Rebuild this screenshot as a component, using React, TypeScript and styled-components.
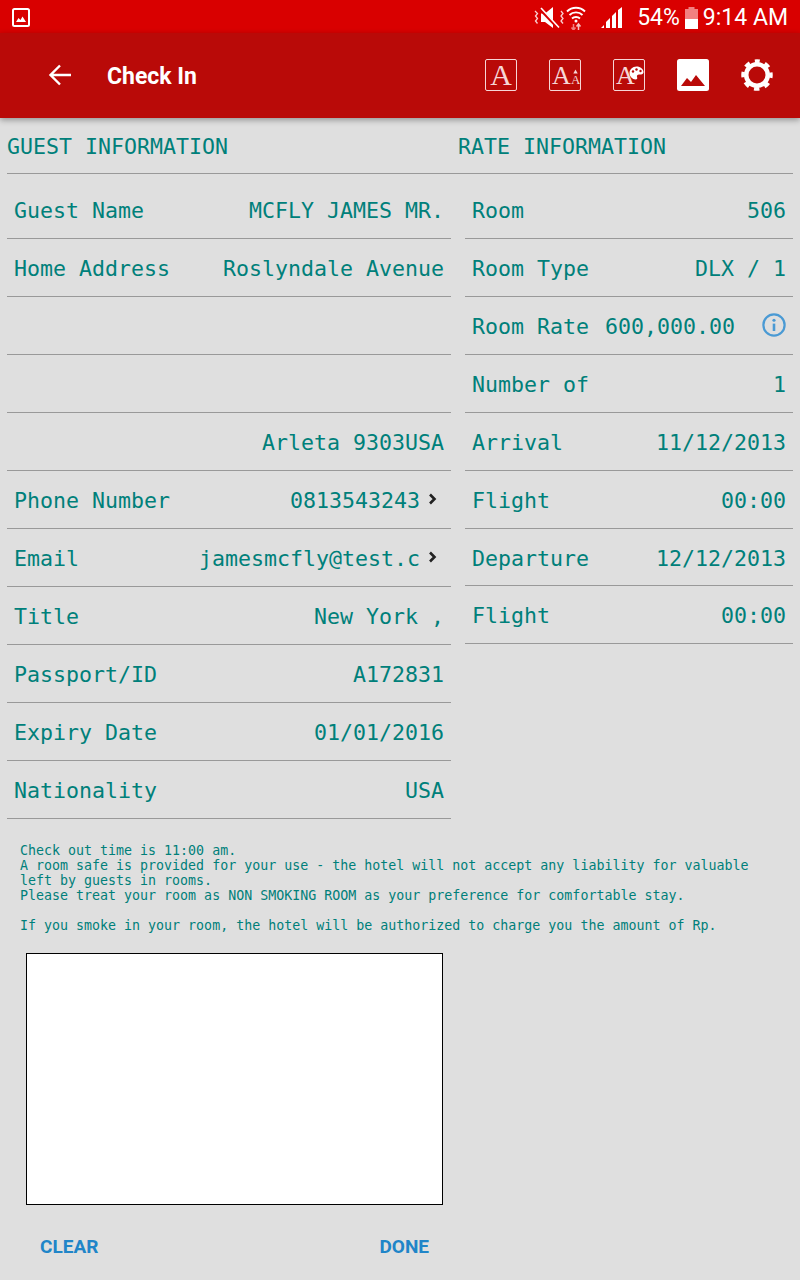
import styled, { createGlobalStyle } from 'styled-components'

const GlobalStyle = createGlobalStyle`
  html, body {
    margin: 0;
    padding: 0;
    background: #dfdfdf;
  }
`

const Page = styled.div`
  width: 800px;
  height: 1280px;
  overflow: hidden;
  background: #dfdfdf;
  color: #00807a;
  font-family: 'DejaVu Sans Mono', 'Liberation Mono', monospace;
`

const StatusBar = styled.div`
  box-sizing: border-box;
  height: 33px;
  background: #d90000;
  color: #fff;
  display: flex;
  align-items: center;
  padding: 2px 12px 0 12px;
  font-family: Roboto, sans-serif;
  font-size: 23px;
`

const StatusRight = styled.div`
  margin-left: auto;
  display: flex;
  align-items: center;
`

const StatusItem = styled.span<{ $left: number }>`
  display: flex;
  align-items: center;
  margin-left: ${(p) => p.$left}px;
`

const Toolbar = styled.div`
  position: relative;
  box-sizing: border-box;
  height: 85px;
  background: #b90a08;
  box-shadow: 0 2px 6px rgba(0, 0, 0, 0.35);
  display: flex;
  align-items: center;
  padding: 0 27px 1px 48px;
  color: #fff;
`

const Title = styled.div`
  margin: 2px 0 0 35px;
  font-family: Roboto, sans-serif;
  font-weight: 700;
  font-size: 23px;
`

const ToolIcons = styled.div`
  margin-left: auto;
  display: flex;
  gap: 32px;
`

const Columns = styled.div`
  display: flex;
  padding: 0 7px;
`

const LeftColumn = styled.div`
  width: 444px;
`

const RightColumn = styled.div`
  width: 328px;
  margin-left: 14px;
`

const SectionHead = styled.div`
  height: 55px;
  border-bottom: 1px solid #999;
  font-size: 21.6px;
  line-height: 57px;
`

const RateHead = styled(SectionHead)`
  margin-left: -14px;
  padding-left: 7px;
`

const Row = styled.div<{ $height?: number }>`
  box-sizing: border-box;
  height: ${(p) => p.$height ?? 58}px;
  border-bottom: 1px solid #999;
  display: flex;
  align-items: center;
  justify-content: space-between;
  padding: ${(p) => (p.$height === 65 ? 8 : 2)}px 7px 0;
  font-size: 21.6px;
  white-space: nowrap;
`

const Value = styled.span`
  display: flex;
  align-items: center;
`

const MoreIcon = styled.svg`
  margin: -4px 7px 0 8px;
`

const RateInfo = styled.svg`
  margin: -4px 0 0 27px;
`

const Notes = styled.div`
  margin: 24px 0 0 20px;
  width: 740px;
  font-size: 13.3px;
  line-height: 15px;
  white-space: pre-wrap;
`

const SignatureBox = styled.div`
  width: 415px;
  height: 250px;
  margin: 20px 0 0 26px;
  background: #fff;
  border: 1px solid #000;
`

const Actions = styled.div`
  width: 389px;
  margin: 30px 0 0 40px;
  display: flex;
  justify-content: space-between;
`

const ActionButton = styled.button`
  padding: 0;
  border: 0;
  background: none;
  color: #2085c8;
  font-family: Roboto, sans-serif;
  font-weight: 700;
  font-size: 19px;
  line-height: 24px;
`

const FrameGlyph = styled.text<{ $size: number }>`
  font-family: 'Liberation Serif', serif;
  font-size: ${(p) => p.$size}px;
  fill: #f6d6d6;
`

const PictureBadge = () => (
  <svg width="18" height="19" viewBox="0 0 18 19">
    <rect x="1" y="1" width="16" height="17" rx="1.5" fill="none" stroke="#fff" strokeWidth="2" />
    <path d="M4 14l2.5-4 2 2 2-3.5 3.500 5.500z" fill="#fff" />
  </svg>
)

const MuteIcon = () => (
  <svg width="32" height="24" viewBox="0 0 32 24" fill="none">
    <path d="M2 5l2.500 2.500-2 2.500 2 2.500-2 2.500 2 2.500" stroke="#f8d0d0" strokeWidth="1.3" />
    <path d="M8 7.500h4l8-6.500v21l-8-6h-4z" fill="#fff" />
    <path d="M7 3l18 19" stroke="#d90000" strokeWidth="3" />
    <path d="M8 2l18 19.500" stroke="#fff" strokeWidth="1.6" />
    <path d="M28 5l2 2.500-2 2.500 2 2.500-2 2.500 2 2.500" stroke="#f8d0d0" strokeWidth="1.3" />
  </svg>
)

const WifiIcon = () => (
  <svg width="20" height="24" viewBox="0 0 20 24" fill="none">
    <path d="M1 5.500c5-5 13-5 18 0M3.500 9c3.500-3.500 9.500-3.500 13 0M6 12.500c2.200-2 5.800-2 8 0" stroke="#fff" strokeWidth="1.9" />
    <circle cx="10" cy="15" r="1.5" fill="#fff" />
    <path d="M7.500 18v6M5.500 21.500l2 2.500 2-2.500" stroke="#f28080" strokeWidth="1.5" />
    <path d="M12.500 24v-6M10.500 20.500l2-2.500 2 2.500" stroke="#f8c0c0" strokeWidth="1.5" />
  </svg>
)

const SignalIcon = () => (
  <svg width="22" height="21" viewBox="0 0 22 21" fill="#fff">
    <path d="M0 21l3-3v3zM5 21v-6l4-4v10zM11 21V9l4-4v16zM17 21V3l4-3v21z" />
  </svg>
)

const BatteryIcon = () => (
  <svg width="13" height="22" viewBox="0 0 13 22">
    <rect x="3.5" y="0" width="6" height="2" fill="#f28080" />
    <rect x="0" y="2" width="13" height="10" fill="#f28080" />
    <rect x="0" y="12" width="13" height="10" fill="#fff" />
  </svg>
)

const BackArrow = () => (
  <svg width="24" height="24" viewBox="0 0 24 24" fill="none" stroke="#fff" strokeWidth="2.4">
    <path d="M23 12H3M12 2.500L2.500 12l9.500 9.500" />
  </svg>
)

const FontIcon = () => (
  <svg width="32" height="32" viewBox="0 0 32 32">
    <rect x="0.5" y="0.5" width="31" height="31" rx="1.5" fill="none" stroke="#f6d6d6" />
    <FrameGlyph $size={30} x="16" y="26" textAnchor="middle">A</FrameGlyph>
  </svg>
)

const FontSizeIcon = () => (
  <svg width="32" height="32" viewBox="0 0 32 32">
    <rect x="0.5" y="0.5" width="31" height="31" rx="1.5" fill="none" stroke="#f6d6d6" />
    <FrameGlyph $size={26} x="3" y="25">A</FrameGlyph>
    <FrameGlyph $size={13} x="22" y="25">A</FrameGlyph>
    <path d="M26.500 10.500l2.200 4h-4.400z" fill="#f6d6d6" />
  </svg>
)

const FontColorIcon = () => (
  <svg width="32" height="32" viewBox="0 0 32 32">
    <rect x="0.5" y="0.5" width="31" height="31" rx="1.5" fill="none" stroke="#f6d6d6" />
    <FrameGlyph $size={26} x="3" y="25">A</FrameGlyph>
    <path d="M23.500 7.500c-4 0-7 3-7 6.500s3 6.500 6 6.500c2 0 2-1.500 1.500-2.500-.5-1.500.5-2.500 2-2.500h2c1.500 0 2.500-1 2.500-2.500 0-3-3-5.500-7-5.500z" fill="#fff" />
    <circle cx="20" cy="12.500" r="1.200" fill="#b90a08" />
    <circle cx="23.500" cy="10.500" r="1.200" fill="#b90a08" />
    <circle cx="27.500" cy="12" r="1.200" fill="#b90a08" />
  </svg>
)

const ImageIcon = () => (
  <svg width="32" height="32" viewBox="0 0 32 32">
    <rect width="32" height="32" rx="2.5" fill="#fff" />
    <path d="M4 27l6-8 4 4 5-7 9 11z" fill="#b90a08" />
  </svg>
)

const GearIcon = () => (
  <svg width="32" height="32" viewBox="0 0 32 32" fill="none" stroke="#fff">
    <circle cx="16" cy="16" r="10.750" strokeWidth="4.5" />
    <circle cx="16" cy="16" r="14" strokeWidth="3.5" strokeDasharray="5.500 5.496" strokeDashoffset="2.750" transform="rotate(-90 16 16)" />
  </svg>
)

const InfoIcon = () => (
  <RateInfo width="24" height="24" viewBox="0 0 26 26" fill="none">
    <circle cx="13" cy="13" r="11.500" stroke="#4a9ad4" strokeWidth="2.4" />
    <circle cx="13" cy="7.800" r="1.700" fill="#4a9ad4" />
    <path d="M13 11.500v8" stroke="#4a9ad4" strokeWidth="2.8" />
  </RateInfo>
)

const Chevron = () => (
  <MoreIcon width="9" height="12" viewBox="0 0 9 12" fill="none">
    <path d="M2 1.500L6.500 6 2 10.500" stroke="#222" strokeWidth="2.6" />
  </MoreIcon>
)

const guestRows = [
  { label: 'Guest Name', value: 'MCFLY JAMES MR.', height: 65 },
  { label: 'Home Address', value: 'Roslyndale Avenue' },
  { label: '', value: '' },
  { label: '', value: '' },
  { label: '', value: 'Arleta 9303USA' },
  { label: 'Phone Number', value: '0813543243', more: true },
  { label: 'Email', value: 'jamesmcfly@test.c', more: true },
  { label: 'Title', value: 'New York ,' },
  { label: 'Passport/ID', value: 'A172831' },
  { label: 'Expiry Date', value: '01/01/2016' },
  { label: 'Nationality', value: 'USA' },
]

const rateRows = [
  { label: 'Room', value: '506', height: 65 },
  { label: 'Room Type', value: 'DLX / 1' },
  { label: 'Room Rate', value: '600,000.00', info: true },
  { label: 'Number of', value: '1' },
  { label: 'Arrival', value: '11/12/2013' },
  { label: 'Flight', value: '00:00' },
  { label: 'Departure', value: '12/12/2013', height: 57 },
  { label: 'Flight', value: '00:00' },
]

const notes = `Check out time is 11:00 am.
A room safe is provided for your use - the hotel will not accept any liability for valuable left by guests in rooms.
Please treat your room as NON SMOKING ROOM as your preference for comfortable stay.

If you smoke in your room, the hotel will be authorized to charge you the amount of Rp.`

export default function App() {
  return (
    <Page>
      <GlobalStyle />
      <StatusBar>
        <PictureBadge />
        <StatusRight>
          <MuteIcon />
          <StatusItem $left={1}><WifiIcon /></StatusItem>
          <StatusItem $left={15}><SignalIcon /></StatusItem>
          <StatusItem $left={14}>54%</StatusItem>
          <StatusItem $left={5}><BatteryIcon /></StatusItem>
          <StatusItem $left={5}>9:14 AM</StatusItem>
        </StatusRight>
      </StatusBar>
      <Toolbar>
        <BackArrow />
        <Title>Check In</Title>
        <ToolIcons>
          <FontIcon />
          <FontSizeIcon />
          <FontColorIcon />
          <ImageIcon />
          <GearIcon />
        </ToolIcons>
      </Toolbar>
      <Columns>
        <LeftColumn>
          <SectionHead>GUEST INFORMATION</SectionHead>
          {guestRows.map((row, i) => (
            <Row key={i} $height={row.height}>
              <span>{row.label}</span>
              <Value>
                {row.value}
                {row.more && <Chevron />}
              </Value>
            </Row>
          ))}
        </LeftColumn>
        <RightColumn>
          <RateHead>RATE INFORMATION</RateHead>
          {rateRows.map((row, i) => (
            <Row key={i} $height={row.height}>
              <span>{row.label}</span>
              <Value>
                {row.value}
                {row.info && <InfoIcon />}
              </Value>
            </Row>
          ))}
        </RightColumn>
      </Columns>
      <Notes>{notes}</Notes>
      <SignatureBox />
      <Actions>
        <ActionButton>CLEAR</ActionButton>
        <ActionButton>DONE</ActionButton>
      </Actions>
    </Page>
  )
}
